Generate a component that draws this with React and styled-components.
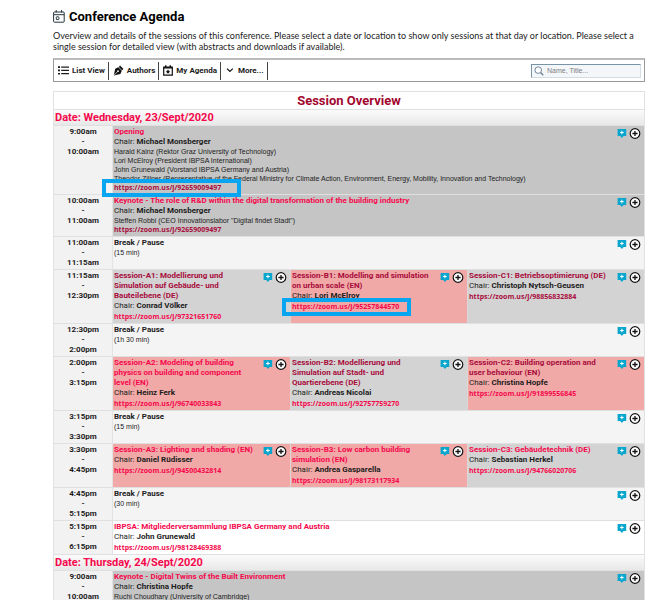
import React, { useState } from 'react';
import styled, { createGlobalStyle, css } from 'styled-components';

const GlobalStyle = createGlobalStyle`
	body {
		margin: 0;
		background: #fff;
		color: #1c1c1c;
		font-family: Roboto, "Liberation Sans", Arial, sans-serif;
		font-size: 8px;
		line-height: 10px;
	}
	* { box-sizing: border-box; }
`;

const PINK = '#f5084c';
const VISITED = '#a80c3c';

const Page = styled.main`
	padding: 8px 23px 0 53px;
`;

const Title = styled.h1`
	display: flex;
	align-items: center;
	gap: 4px;
	margin: 0 0 5px;
	font-size: 13px;
	line-height: 17px;
	color: #000;
`;

const Intro = styled.p`
	margin: 0 0 6px;
	font-family: Lato, "Liberation Sans", sans-serif;
	font-size: 9px;
	line-height: 11px;
	color: #222;
`;

const Toolbar = styled.nav`
	display: flex;
	align-items: center;
	height: 24px;
	margin-bottom: 9px;
	padding-right: 3px;
	border: 1px solid #999;
	border-top: 2px solid #bbb;
`;

const ToolButton = styled.button`
	display: flex;
	align-items: center;
	gap: 3px;
	height: 18px;
	padding: 0 3px 0 4px;
	border: 0;
	border-right: 1px solid #444;
	background: none;
	color: #1c1c1c;
	font: bold 8px/10px Roboto, "Liberation Sans", sans-serif;
	white-space: nowrap;
	cursor: pointer;
`;

const Search = styled.label`
	display: flex;
	align-items: center;
	gap: 3px;
	width: 110px;
	height: 14px;
	margin-left: auto;
	padding-left: 2px;
	border: 1px solid #d5dde4;
	border-top-color: #7894a6;
	border-left-color: #7894a6;
	background: #f4f7fa;
`;

const SearchInput = styled.input`
	flex: 1;
	min-width: 0;
	padding: 0;
	border: 0;
	outline: 0;
	background: none;
	font: 7px/10px "Liberation Sans", Arial, sans-serif;

	&::placeholder { color: #7d7d85; }
`;

const Agenda = styled.table`
	width: 100%;
	table-layout: fixed;
	border-collapse: separate;
	border-spacing: 0;
	border: 1px solid #e2e2e2;
	border-width: 0 1px 0 1px;

	td, th {
		border-top: 1px solid #e0e0e0;
		vertical-align: top;
	}
`;

const TimeCol = styled.col`
	width: 59px;
`;

const Heading = styled.th`
	padding: 1px 0 0;
	font-size: 13px;
	line-height: 16px;
	color: #a3062f;
`;

const DateHeading = styled.th`
	padding: 0 1px;
	font-size: 11px;
	line-height: 15px;
	text-align: left;
	color: ${PINK};
	background: linear-gradient(#fbfbfb, #e8e8e8);
`;

const Time = styled.th`
	padding: 1px 0;
	background: #f2f2f2;
	border-right: 1px solid #e2e2e2;
	text-align: center;
	white-space: pre-line;
`;

const tones = {
	plenary: '#c5c5c5',
	gray: '#d3d3d3',
	red: '#f0a9a7',
	pause: '#f4f4f4',
	white: '#fff',
};

const Cell = styled.td`
	padding: 1px 3px 1px 1px;
	background: ${p => tones[p.$tone]};

	& + td { border-left: 1px solid #dcd6d6; }
`;

const CellBody = styled.div`
	display: flex;
	justify-content: space-between;
	gap: 8px;
`;

const SessionTitle = styled.a`
	display: block;
	font-weight: bold;
	text-decoration: none;
	color: ${p => (p.$visited ? VISITED : PINK)};
`;

const PauseTitle = styled.div`
	font-weight: bold;
`;

const Note = styled.div`
	font-family: "Liberation Sans", Arial, sans-serif;
	font-size: 7px;
	line-height: 9px;
	color: #1c1c1c;
`;

const ZoomLink = styled.a`
	position: relative;
	display: block;
	width: fit-content;
	margin-top: ${p => (p.$tight ? 0 : 1)}px;
	font-family: "Open Sans", Roboto, sans-serif;
	font-size: 7px;
	font-weight: bold;
	text-decoration: none;
	color: ${p => (p.$visited ? VISITED : PINK)};

	${p => p.$marked && css`
		&::after {
			content: '';
			position: absolute;
			inset: -4px ${p.$marked === 'wide' ? '-20px' : '-12px'} -4px ${p.$marked === 'wide' ? '-12px' : '-10px'};
			border: 4px solid #08a6f0;
		}
	`}
`;

const Actions = styled.div`
	display: flex;
	flex: none;
	align-items: center;
	gap: 2px;
	height: 11px;
	margin-top: 1px;
`;

const IconButton = styled.button`
	display: flex;
	padding: 0;
	border: 0;
	background: none;
	cursor: pointer;
`;

const days = [
	{
		date: 'Wednesday, 23/Sept/2020',
		slots: [
			{ from: '9:00am', to: '10:00am', sessions: [
				{ tone: 'plenary', title: 'Opening', chair: 'Michael Monsberger', zoom: '92659009497', zoomVisited: true, marked: 'wide', notes: [
					'Harald Kainz (Rektor Graz University of Technology)',
					'Lori McElroy (President IBPSA International)',
					'John Grunewald (Vorstand IBPSA Germany and Austria)',
					'Theodor Zillner (Representative of the Federal Ministry for Climate Action, Environment, Energy, Mobility, Innovation and Technology)',
				] },
			] },
			{ from: '10:00am', to: '11:00am', sessions: [
				{ tone: 'plenary', title: 'Keynote - The role of R&D within the digital transformation of the building industry', chair: 'Michael Monsberger', zoom: '92659009497', zoomVisited: true, notes: ['Steffen Robbi (CEO Innovationslabor "Digital findet Stadt")'] },
			] },
			{ from: '11:00am', to: '11:15am', pause: '15 min' },
			{ from: '11:15am', to: '12:30pm', sessions: [
				{ tone: 'gray', title: 'Session-A1: Modellierung und Simulation auf Gebäude- und Bauteilebene (DE)', visited: true, chair: 'Conrad Völker', zoom: '97321651760' },
				{ tone: 'red', title: 'Session-B1: Modelling and simulation on urban scale (EN)', visited: true, chair: 'Lori McElroy', zoom: '95257844570', marked: 'narrow' },
				{ tone: 'gray', title: 'Session-C1: Betriebsoptimierung (DE)', visited: true, chair: 'Christoph Nytsch-Geusen', zoom: '98856832884', zoomVisited: true },
			] },
			{ from: '12:30pm', to: '2:00pm', pause: '1h 30 min' },
			{ from: '2:00pm', to: '3:15pm', sessions: [
				{ tone: 'red', title: 'Session-A2: Modeling of building physics on building and component level (EN)', chair: 'Heinz Ferk', zoom: '96740033843' },
				{ tone: 'gray', title: 'Session-B2: Modellierung und Simulation auf Stadt- und Quartierebene (DE)', visited: true, chair: 'Andreas Nicolai', zoom: '92757759270' },
				{ tone: 'red', title: 'Session-C2: Building operation and user behaviour (EN)', visited: true, chair: 'Christina Hopfe', zoom: '91899556845' },
			] },
			{ from: '3:15pm', to: '3:30pm', pause: '15 min' },
			{ from: '3:30pm', to: '4:45pm', sessions: [
				{ tone: 'red', title: 'Session-A3: Lighting and shading (EN)', chair: 'Daniel Rüdisser', zoom: '94500432814' },
				{ tone: 'red', title: 'Session-B3: Low carbon building simulation (EN)', chair: 'Andrea Gasparella', zoom: '98173117934' },
				{ tone: 'gray', title: 'Session-C3: Gebäudetechnik (DE)', chair: 'Sebastian Herkel', zoom: '94766020706' },
			] },
			{ from: '4:45pm', to: '5:15pm', pause: '30 min' },
			{ from: '5:15pm', to: '6:15pm', sessions: [
				{ tone: 'white', title: 'IBPSA: Mitgliederversammlung IBPSA Germany and Austria', chair: 'John Grunewald', zoom: '98128469388' },
			] },
		],
	},
	{
		date: 'Thursday, 24/Sept/2020',
		slots: [
			{ from: '9:00am', to: '10:00am', sessions: [
				{ tone: 'plenary', title: 'Keynote - Digital Twins of the Built Environment', chair: 'Christina Hopfe', notes: ['Ruchi Choudhary (University of Cambridge)'] },
			] },
		],
	},
];

const CalendarIcon = () => (
	<svg width="12" height="13" viewBox="0 0 12 13" fill="none" stroke="#26343b">
		<rect x=".6" y="2" width="10.6" height="10.2" rx=".8" />
		<path d="M.6 4.7h10.6M3.2 0v2.5M8.6 0v2.5" />
		<rect x="3.3" y="6.8" width="2.6" height="2.8" rx=".5" />
	</svg>
);

const ListIcon = () => (
	<svg width="11" height="9" viewBox="0 0 11 9" fill="#1c1c1c">
		<path d="M0 .3h2v1.6H0zM0 3.6h2v1.6H0zM0 6.9h2v1.6H0zM3.2.5H11v1.2H3.2zM3.2 3.8H11V5H3.2zM3.2 7.1H11v1.2H3.2z" />
	</svg>
);

const PenIcon = () => (
	<svg width="11" height="11" viewBox="0 0 11 11">
		<path d="M7 .5 10.5 4 9 5.2 5.8 2z" fill="#111" />
		<path d="M5.3 2.3 8.8 5.7 7.4 9 .8 10.6 2.2 3.8z" fill="#111" />
		<path d="M1.1 10.2 4.5 6.7" stroke="#fff" strokeWidth=".7" />
		<circle cx="5" cy="6.2" r=".9" fill="#fff" />
	</svg>
);

const StarCalendarIcon = () => (
	<svg width="10" height="11" viewBox="0 0 10 11">
		<path d="M.7 2h8.6v8.2H.7z" fill="none" stroke="#111" strokeWidth="1.2" />
		<path d="M.7 2h8.6v1.5H.7zM2 .3h1.4v2H2zM6.6.3H8v2H6.6z" fill="#111" />
		<path d="m5 4.3.7 1.4 1.5.2-1.1 1.1.3 1.6L5 7.9l-1.4.7.3-1.6-1.1-1.1 1.5-.2z" fill="#111" />
	</svg>
);

const ChevronIcon = () => (
	<svg width="10" height="8" viewBox="0 0 10 8" fill="none" stroke="#111" strokeWidth="1.3">
		<path d="m2 1.6 2.9 2.8 2.9-2.8" />
	</svg>
);

const SearchIcon = () => (
	<svg width="10" height="10" viewBox="0 0 10 10" fill="none" stroke="#71869a">
		<circle cx="4.2" cy="4.1" r="3.3" fill="#fff" />
		<path d="m6.6 6.5 2.6 2.8" strokeWidth="1.5" />
	</svg>
);

const BubbleIcon = () => (
	<svg width="10" height="9" viewBox="0 0 10 9">
		<path d="M.6 0h8.6v7H6.6L4.9 9 3.2 7H.6z" fill="#08a6cc" />
		<path d="M4.9 1.7v3.6M3.1 3.5h3.6" stroke="#fff" strokeWidth="1" />
	</svg>
);

const PlusIcon = () => (
	<svg width="12" height="11" viewBox="0 0 12 11">
		<circle cx="6" cy="5.5" r="4.8" fill="#fff" stroke="#111" strokeWidth="1.2" />
		<path d="M6 2.9v5.2M3.4 5.5h5.2" stroke="#111" strokeWidth="1.3" />
	</svg>
);

function SessionActions() {
	return (
		<Actions>
			<IconButton aria-label="Add comment"><BubbleIcon /></IconButton>
			<IconButton aria-label="Add to my agenda"><PlusIcon /></IconButton>
		</Actions>
	);
}

function Session({ session, span }) {
	const { tone, title, visited, chair, notes, zoom, zoomVisited, marked } = session;

	return (
		<Cell $tone={tone} colSpan={span}>
			<CellBody>
				<div>
					<SessionTitle href="#session" $visited={visited}>{title}</SessionTitle>
					<div>Chair: <b>{chair}</b></div>
					{notes && notes.map(note => <Note key={note}>{note}</Note>)}
					{zoom && (
						<ZoomLink href={`https://zoom.us/j/${zoom}`} $visited={zoomVisited} $marked={marked} $tight={!!notes}>
							https://zoom.us/j/{zoom}
						</ZoomLink>
					)}
				</div>
				<SessionActions />
			</CellBody>
		</Cell>
	);
}

function Slot({ slot }) {
	return (
		<tr>
			<Time scope="row">{`${slot.from}\n-\n${slot.to}`}</Time>
			{slot.pause ? (
				<Cell $tone="pause" colSpan={3}>
					<CellBody>
						<div>
							<PauseTitle>Break / Pause</PauseTitle>
							<Note>({slot.pause})</Note>
						</div>
						<SessionActions />
					</CellBody>
				</Cell>
			) : slot.sessions.map(session => (
				<Session key={session.title} session={session} span={slot.sessions.length === 1 ? 3 : 1} />
			))}
		</tr>
	);
}

export default function App() {
	const [ query, setQuery ] = useState('');

	return (
		<>
			<GlobalStyle />
			<Page>
				<Title><CalendarIcon />Conference Agenda</Title>
				<Intro>
					Overview and details of the sessions of this conference. Please select a date or location to show only sessions at that day or location. Please select a single session for detailed view (with abstracts and downloads if available).
				</Intro>

				<Toolbar>
					<ToolButton><ListIcon />List View</ToolButton>
					<ToolButton><PenIcon />Authors</ToolButton>
					<ToolButton><StarCalendarIcon />My Agenda</ToolButton>
					<ToolButton><ChevronIcon />More...</ToolButton>
					<Search>
						<SearchIcon />
						<SearchInput aria-label="Search" placeholder="Name, Title..." value={query} onChange={(e) => setQuery(e.target.value)} />
					</Search>
				</Toolbar>

				<Agenda>
					<colgroup>
						<TimeCol />
						<col />
						<col />
						<col />
					</colgroup>
					<thead>
						<tr><Heading colSpan={4}>Session Overview</Heading></tr>
					</thead>
					{days.map(day => (
						<tbody key={day.date}>
							<tr><DateHeading colSpan={4}>Date: {day.date}</DateHeading></tr>
							{day.slots.map(slot => <Slot key={slot.from} slot={slot} />)}
						</tbody>
					))}
				</Agenda>
			</Page>
		</>
	);
}
